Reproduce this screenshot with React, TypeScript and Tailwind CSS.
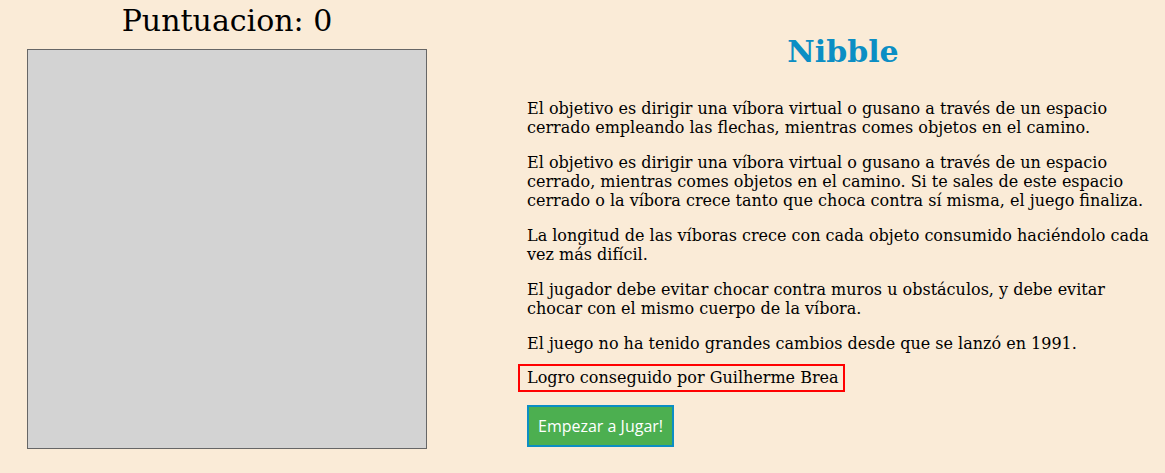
export default function App() {
  const paragraphs = [
    "El objetivo es dirigir una víbora virtual o gusano a través de un espacio cerrado empleando las flechas, mientras comes objetos en el camino.",
    "El objetivo es dirigir una víbora virtual o gusano a través de un espacio cerrado, mientras comes objetos en el camino. Si te sales de este espacio cerrado o la víbora crece tanto que choca contra sí misma, el juego finaliza.",
    "La longitud de las víboras crece con cada objeto consumido haciéndolo cada vez más difícil.",
    "El jugador debe evitar chocar contra muros u obstáculos, y debe evitar chocar con el mismo cuerpo de la víbora.",
    "El juego no ha tenido grandes cambios desde que se lanzó en 1991.",
  ];

  return (
    <div className="min-h-[473px] w-full bg-[#faebd7] text-black font-['DejaVu_Serif',serif]">
      <div className="flex">
        {/* juego */}
        <div className="w-[454px] flex flex-col items-center">
          <h1 className="mt-[3px] text-[30px] leading-[35px] font-normal">Puntuacion: 0</h1>
          <div className="mt-[11px] w-[400px] h-[400px] bg-[#d3d3d3] border border-[#666]"></div>
        </div>

        {/* info */}
        <div className="flex-1 pl-[73px] pr-[6px]">
          <h2 className="mt-[34px] text-center text-[30px] leading-[normal] font-bold text-[#0b8ec4]">
            Nibble
          </h2>
          <div className="mt-[30px] flex flex-col gap-4 text-[16px] leading-[19px]">
            {paragraphs.map((p, i) => (
              <p key={i}>{p}</p>
            ))}
          </div>
          <div className="mt-[11px] -ml-[9px] inline-block border-2 border-[#ff0000] pl-[7px] pr-[4px] py-[2px] text-[16px] leading-[20px]">
            Logro conseguido por Guilherme Brea
          </div>
          <div className="mt-[13px]">
            <button className="h-[42px] px-[9px] bg-[#4caf50] border-2 border-[#0b8ec4] text-white text-[16px] font-['Open_Sans',sans-serif]">
              Empezar a Jugar!
            </button>
          </div>
        </div>
      </div>
    </div>
  );
}
